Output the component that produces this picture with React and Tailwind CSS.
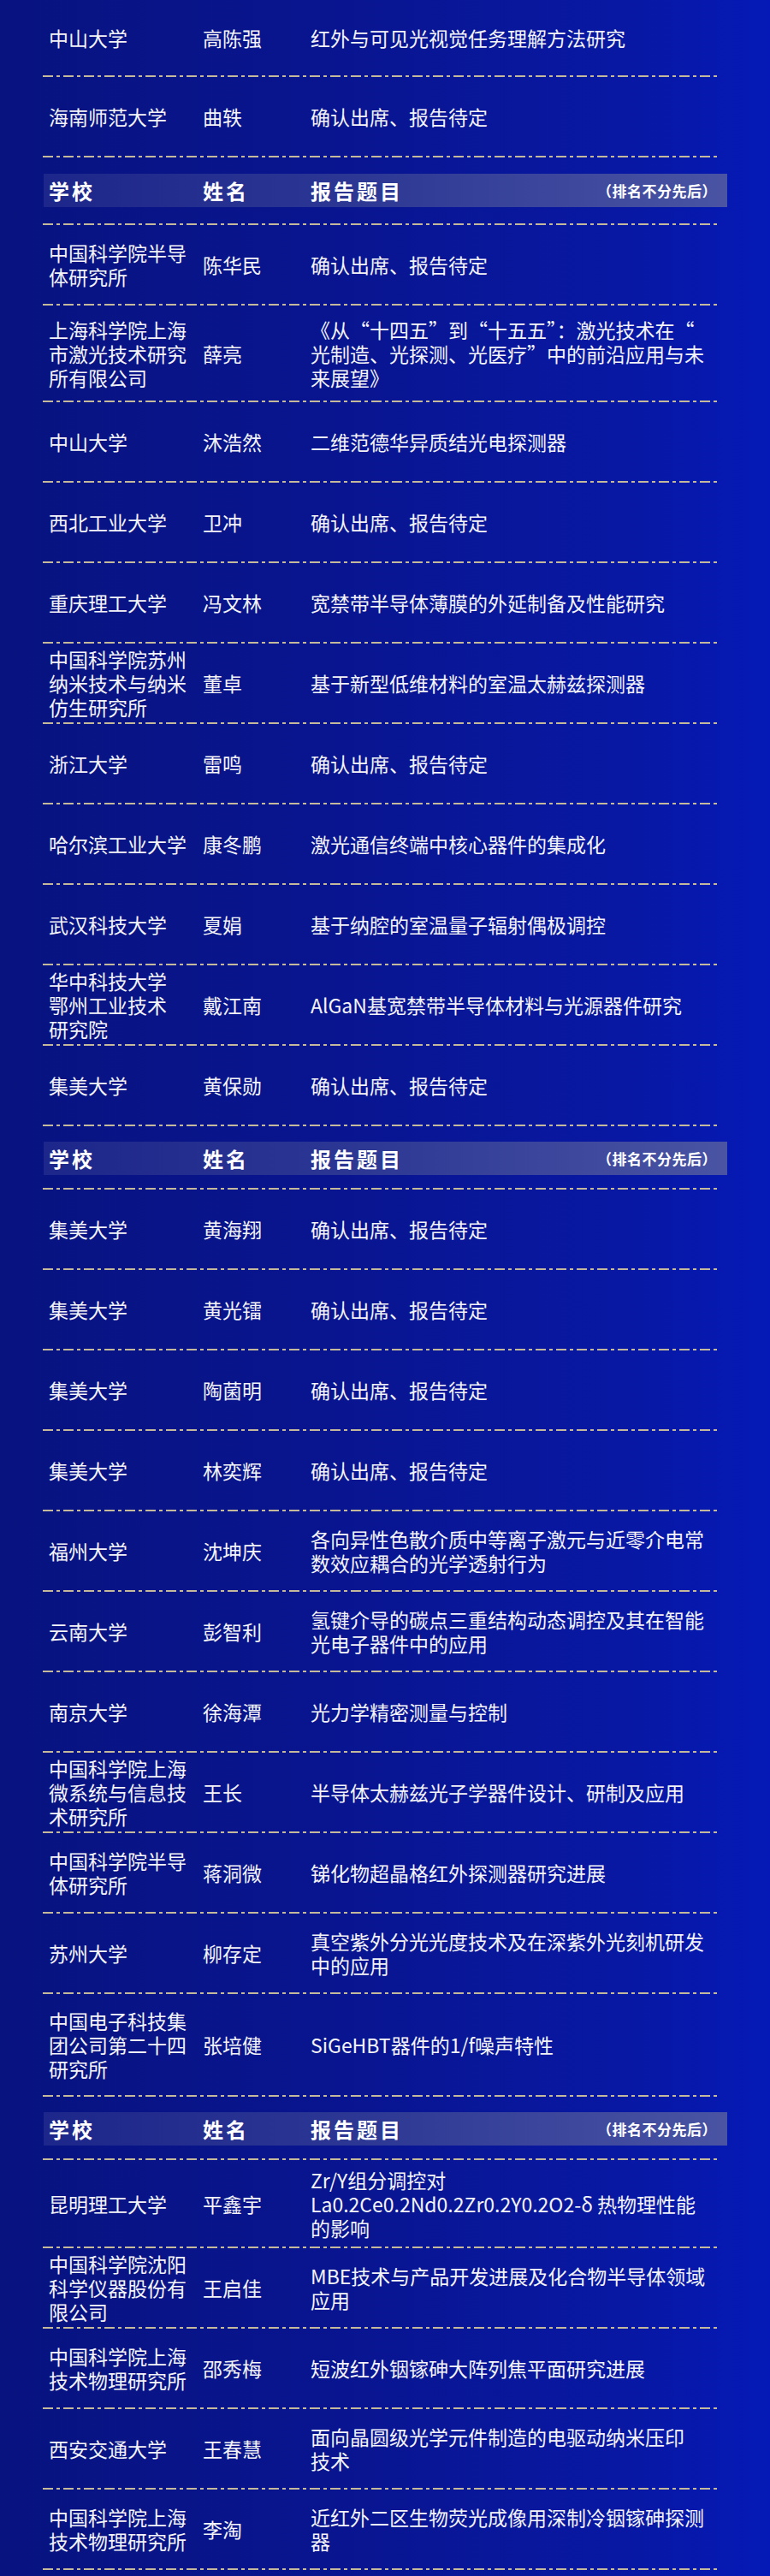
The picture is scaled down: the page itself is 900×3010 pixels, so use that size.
import React from "react";

const H = {
  88: "h-[88px]",
  92: "h-[92px]",
  111: "h-[111px]",
  118: "h-[118px]",
  101: "h-[101px]",
};

const sec1 = [
  { s: ["中山大学"], n: "高陈强", t: ["红外与可见光视觉任务理解方法研究"], h: 88 },
  { s: ["海南师范大学"], n: "曲轶", t: ["确认出席、报告待定"], h: 92 },
];

const sec2 = [
  { s: ["中国科学院半导", "体研究所"], n: "陈华民", t: ["确认出席、报告待定"], h: 92 },
  {
    s: ["上海科学院上海", "市激光技术研究", "所有限公司"],
    n: "薛亮",
    t: ["《从“十四五”到“十五五”：激光技术在“", "光制造、光探测、光医疗”中的前沿应用与未", "来展望》"],
    h: 111,
  },
  { s: ["中山大学"], n: "沐浩然", t: ["二维范德华异质结光电探测器"], h: 92 },
  { s: ["西北工业大学"], n: "卫冲", t: ["确认出席、报告待定"], h: 92 },
  { s: ["重庆理工大学"], n: "冯文林", t: ["宽禁带半导体薄膜的外延制备及性能研究"], h: 92 },
  { s: ["中国科学院苏州", "纳米技术与纳米", "仿生研究所"], n: "董卓", t: ["基于新型低维材料的室温太赫兹探测器"], h: 92 },
  { s: ["浙江大学"], n: "雷鸣", t: ["确认出席、报告待定"], h: 92 },
  { s: ["哈尔滨工业大学"], n: "康冬鹏", t: ["激光通信终端中核心器件的集成化"], h: 92 },
  { s: ["武汉科技大学"], n: "夏娟", t: ["基于纳腔的室温量子辐射偶极调控"], h: 92 },
  { s: ["华中科技大学", "鄂州工业技术", "研究院"], n: "戴江南", t: ["AlGaN基宽禁带半导体材料与光源器件研究"], h: 92 },
  { s: ["集美大学"], n: "黄保勋", t: ["确认出席、报告待定"], h: 92 },
];

const sec3 = [
  { s: ["集美大学"], n: "黄海翔", t: ["确认出席、报告待定"], h: 92 },
  { s: ["集美大学"], n: "黄光镭", t: ["确认出席、报告待定"], h: 92 },
  { s: ["集美大学"], n: "陶菌明", t: ["确认出席、报告待定"], h: 92 },
  { s: ["集美大学"], n: "林奕辉", t: ["确认出席、报告待定"], h: 92 },
  { s: ["福州大学"], n: "沈坤庆", t: ["各向异性色散介质中等离子激元与近零介电常", "数效应耦合的光学透射行为"], h: 92 },
  { s: ["云南大学"], n: "彭智利", t: ["氢键介导的碳点三重结构动态调控及其在智能", "光电子器件中的应用"], h: 92 },
  { s: ["南京大学"], n: "徐海潭", t: ["光力学精密测量与控制"], h: 92 },
  { s: ["中国科学院上海", "微系统与信息技", "术研究所"], n: "王长", t: ["半导体太赫兹光子学器件设计、研制及应用"], h: 92 },
  { s: ["中国科学院半导", "体研究所"], n: "蒋洞微", t: ["锑化物超晶格红外探测器研究进展"], h: 92 },
  { s: ["苏州大学"], n: "柳存定", t: ["真空紫外分光光度技术及在深紫外光刻机研发", "中的应用"], h: 92 },
  { s: ["中国电子科技集", "团公司第二十四", "研究所"], n: "张培健", t: ["SiGeHBT器件的1/f噪声特性"], h: 118 },
];

const sec4 = [
  { s: ["昆明理工大学"], n: "平鑫宇", t: ["Zr/Y组分调控对", "La0.2Ce0.2Nd0.2Zr0.2Y0.2O2-δ 热物理性能", "的影响"], h: 101 },
  { s: ["中国科学院沈阳", "科学仪器股份有", "限公司"], n: "王启佳", t: ["MBE技术与产品开发进展及化合物半导体领域", "应用"], h: 92 },
  { s: ["中国科学院上海", "技术物理研究所"], n: "邵秀梅", t: ["短波红外铟镓砷大阵列焦平面研究进展"], h: 92 },
  { s: ["西安交通大学"], n: "王春慧", t: ["面向晶圆级光学元件制造的电驱动纳米压印", "技术"], h: 92 },
  { s: ["中国科学院上海", "技术物理研究所"], n: "李淘", t: ["近红外二区生物荧光成像用深制冷铟镓砷探测", "器"], h: 92 },
];

function Dash() {
  return (
    <div className="h-[2px] w-[790px] bg-[repeating-linear-gradient(90deg,#c4b99a_0px,#c4b99a_12px,transparent_12px,transparent_16px,#c4b99a_16px,#c4b99a_20px,transparent_20px,transparent_24px)]" />
  );
}

function Lines({ lines }) {
  return (
    <div className="flex flex-col">
      {lines.map((l, i) => (
        <div key={i} className="whitespace-nowrap leading-[28px]">
          {l}
        </div>
      ))}
    </div>
  );
}

function Row({ r }) {
  return (
    <>
      <div className={`flex items-center pl-[7px] text-[23px] text-[#f4f4f8] ${H[r.h]}`}>
        <div className="w-[180px] shrink-0">
          <Lines lines={r.s} />
        </div>
        <div className="w-[126px] shrink-0 whitespace-nowrap leading-[28px]">{r.n}</div>
        <div className="flex-1">
          <Lines lines={r.t} />
        </div>
      </div>
      <Dash />
    </>
  );
}

function Header({ cls }) {
  return (
    <div
      className={`ml-[1px] flex h-[39px] w-[799px] items-center bg-[linear-gradient(90deg,#1d268a_0%,#2c3794_45%,#4a54a3_100%)] pl-[6px] pr-[12px] font-bold text-white ${cls}`}
    >
      <div className="w-[180px] shrink-0 text-[24px] tracking-[3px]">学校</div>
      <div className="w-[126px] shrink-0 text-[24px] tracking-[3px]">姓名</div>
      <div className="flex-1 text-[24px] tracking-[3px]">报告题目</div>
      <div className="text-[17px] tracking-[0.5px]">（排名不分先后）</div>
    </div>
  );
}

export default function App() {
  return (
    <div
      className="h-[3010px] w-full overflow-hidden bg-[linear-gradient(90deg,#081380_0%,#091590_45%,#0818a2_80%,#0519b6_100%)] pl-[50px]"
      style={{ fontFamily: '"Noto Sans CJK SC", "Noto Sans", sans-serif' }}
    >
      {sec1.map((r, i) => (
        <Row key={i} r={r} />
      ))}
      <Header cls="mt-[19px] mb-[19px]" />
      <Dash />
      {sec2.map((r, i) => (
        <Row key={i} r={r} />
      ))}
      <Header cls="mt-[18px] mb-[15px]" />
      <Dash />
      {sec3.map((r, i) => (
        <Row key={i} r={r} />
      ))}
      <Header cls="mt-[18px] mb-[15px]" />
      <Dash />
      {sec4.map((r, i) => (
        <Row key={i} r={r} />
      ))}
    </div>
  );
}
